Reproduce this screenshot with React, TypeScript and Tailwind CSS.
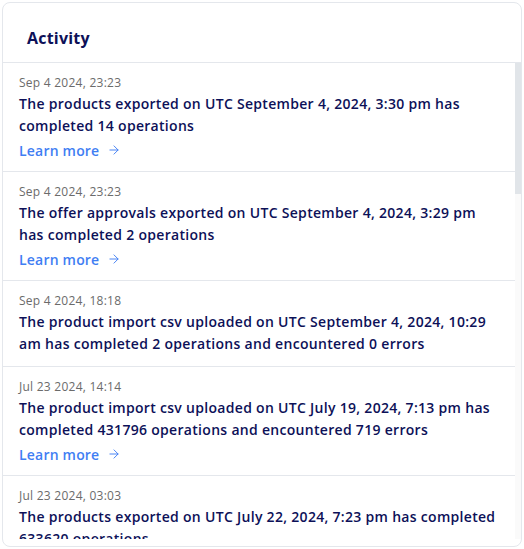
import { ArrowRight } from 'lucide-react';

type Activity = {
  id: number;
  date: string;
  message: string;
  link?: boolean;
};

const activities: Activity[] = [
  {
    id: 1,
    date: 'Sep 4 2024, 23:23',
    message: 'The products exported on UTC September 4, 2024, 3:30 pm has completed 14 operations',
    link: true,
  },
  {
    id: 2,
    date: 'Sep 4 2024, 23:23',
    message: 'The offer approvals exported on UTC September 4, 2024, 3:29 pm has completed 2 operations',
    link: true,
  },
  {
    id: 3,
    date: 'Sep 4 2024, 18:18',
    message:
      'The product import csv uploaded on UTC September 4, 2024, 10:29 am has completed 2 operations and encountered 0 errors',
  },
  {
    id: 4,
    date: 'Jul 23 2024, 14:14',
    message:
      'The product import csv uploaded on UTC July 19, 2024, 7:13 pm has completed 431796 operations and encountered 719 errors',
    link: true,
  },
  {
    id: 5,
    date: 'Jul 23 2024, 03:03',
    message: 'The products exported on UTC July 22, 2024, 7:23 pm has completed 633620 operations',
    link: true,
  },
];

export default function App() {
  return (
    <div className="h-[549px] w-[524px] bg-white p-[2px] font-['Open_Sans',sans-serif]">
      <div className="flex h-[545px] flex-col overflow-hidden rounded-lg border border-[#e4e7ec] bg-white pb-[7px]">
        {/* Header */}
        <div className="flex h-[60px] shrink-0 items-center border-b border-[#e4e7ec] px-6 pt-[11px]">
          <h2 className="text-[16px] font-bold tracking-[0.2px] text-[#0d1158]">Activity</h2>
        </div>

        {/* List */}
        <div className="relative flex-1 overflow-hidden">
          <ul className="pr-[6px]">
            {activities.map((a) => (
              <li key={a.id} className="border-b border-[#e4e7ec] pb-[11px] pl-4 pr-3 pt-3">
                <p className="text-[12px] leading-4 tracking-[0.25px] text-[#6b6b6b]">{a.date}</p>
                <p className="mt-[2px] text-[14px] font-semibold leading-[22px] tracking-[0.3px] text-[#0d1158]">
                  {a.message}
                </p>
                {a.link && (
                  <a
                    href="#"
                    className="mt-[3px] flex h-5 items-center gap-[8px] text-[14px] font-semibold tracking-[0.2px] text-[#3f7ef3]"
                  >
                    Learn more
                    <ArrowRight className="h-[14px] w-[14px]" strokeWidth={1.6} />
                  </a>
                )}
              </li>
            ))}
          </ul>
          {/* Scrollbar */}
          <div className="absolute right-0 top-0 h-full w-[6px] bg-[#fafafa]">
            <div className="h-[131px] w-full bg-[#e1e5e9]" />
          </div>
        </div>
      </div>
    </div>
  );
}
